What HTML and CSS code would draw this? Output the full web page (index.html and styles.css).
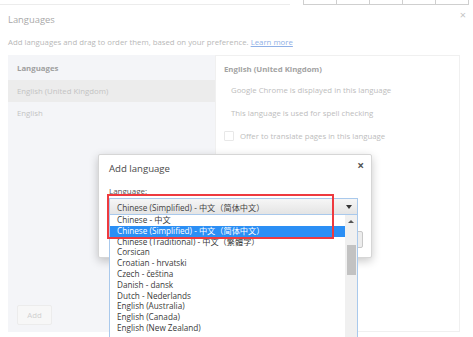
FILE: index.html
```html
<!DOCTYPE html>
<html lang="en">
  <head>
    <meta charset="UTF-8" />
    <meta name="viewport" content="width=device-width, initial-scale=1.0" />
    <title>Languages</title>
    <link rel="stylesheet" href="styles.css">
  </head>
  <body>
    <div class="page">
      <div class="top-strip">
        <div class="top-line"></div>
        <div class="top-grid">
          <span></span><span></span><span></span><span></span><span></span>
        </div>
      </div>

      <div class="settings">
        <div class="settings-head">
          <div class="settings-title">Languages</div>
          <div class="settings-close">&times;</div>
        </div>
        <div class="settings-desc">
          Add languages and drag to order them, based on your preference.
          <a class="link">Learn more</a>
        </div>
        <div class="panels">
          <div class="lang-list">
            <div class="lang-head">Languages</div>
            <div class="lang-row selected">English (United Kingdom)</div>
            <div class="lang-row">English</div>
            <div class="lang-spacer"></div>
            <div class="add-button">Add</div>
          </div>
          <div class="lang-detail">
            <div class="detail-head">English (United Kingdom)</div>
            <div class="detail-line">Google Chrome is displayed in this language</div>
            <div class="detail-line">This language is used for spell checking</div>
            <div class="detail-check">
              <span class="checkbox"></span>
              <span>Offer to translate pages in this language</span>
            </div>
          </div>
        </div>
      </div>

      <div class="dialog">
        <div class="dialog-head">
          <div class="dialog-title">Add language</div>
          <div class="dialog-close">&times;</div>
        </div>
        <div class="field-label">Language:</div>
        <div class="select-wrap">
          <div class="select">
            <span>Chinese (Simplified) - 中文（简体中文）</span>
            <span class="select-arrow"></span>
          </div>
          <div class="dropdown">
            <div class="options">
              <div class="option">Chinese - 中文</div>
              <div class="option active">Chinese (Simplified) - 中文（简体中文）</div>
              <div class="option">Chinese (Traditional) - 中文（繁體字）</div>
              <div class="option">Corsican</div>
              <div class="option">Croatian - hrvatski</div>
              <div class="option">Czech - čeština</div>
              <div class="option">Danish - dansk</div>
              <div class="option">Dutch - Nederlands</div>
              <div class="option">English (Australia)</div>
              <div class="option">English (Canada)</div>
              <div class="option">English (New Zealand)</div>
            </div>
            <div class="scrollbar">
              <span class="scroll-up"></span>
              <span class="scroll-thumb"></span>
            </div>
          </div>
        </div>
        <div class="hidden-button"></div>
      </div>

      <div class="highlight-box"></div>
    </div>
  </body>
</html>
```

FILE: styles.css
```css
body {
  margin: 0;
  font-family: "Open Sans", "Noto Sans CJK SC", sans-serif;
  background-color: #ffffff;
}
.page {
  position: relative;
  width: 473px;
  height: 337px;
  overflow: hidden;
  background-color: #ffffff;
}
.top-strip {
  display: flex;
  justify-content: space-between;
  height: 5px;
}
.top-line {
  width: 290px;
  border-bottom: 1px solid #ececec;
}
.top-grid {
  display: flex;
  margin-right: 4px;
  border-bottom: 1px solid #cfcfcf;
  border-left: 1px solid #cfcfcf;
}
.top-grid span {
  width: 32px;
  border-right: 1px solid #cfcfcf;
}
.settings {
  margin: 0 13px 0 8px;
  display: flex;
  flex-direction: column;
}
.settings-head {
  display: flex;
  justify-content: space-between;
  align-items: flex-start;
  height: 32px;
}
.settings-title {
  margin-top: 8px;
  font-size: 9.4px;
  color: #a9a9a9;
}
.settings-close {
  margin-top: 2px;
  margin-right: -6px;
  font-size: 11px;
  color: #c4c4c4;
}
.settings-desc {
  font-size: 7.8px;
  color: #b8b8b8;
  height: 18px;
}
.link {
  color: #8fb0e6;
  text-decoration: underline;
}
.panels {
  display: grid;
  grid-template-columns: 207px 245px;
  height: 277px;
}
.lang-list {
  display: flex;
  flex-direction: column;
  background-color: #f4f5f8;
  font-size: 7.8px;
  color: #c3c3c3;
}
.lang-head {
  padding: 8px 9px;
  height: 9px;
  font-weight: bold;
  color: #9f9f9f;
}
.lang-row {
  padding: 0 9px;
  height: 22px;
  line-height: 22px;
}
.lang-row.selected {
  background-color: #ececec;
}
.lang-spacer {
  flex: 1;
}
.add-button {
  margin: 0 0 7px 9px;
  width: 33px;
  height: 18px;
  line-height: 18px;
  text-align: center;
  border: 1px solid #ececec;
  border-radius: 2px;
  background-color: #f7f7f7;
  color: #d0d0d0;
}
.lang-detail {
  border: 1px solid #f0f0f0;
  background-color: #ffffff;
  font-size: 7.8px;
  color: #bdbdbd;
  padding: 0 8px;
}
.detail-head {
  padding: 8px 0 0;
  height: 15px;
  font-weight: bold;
  color: #a3a3a3;
}
.detail-line {
  padding-left: 7px;
  height: 23px;
  line-height: 23px;
}
.detail-check {
  display: flex;
  align-items: center;
  gap: 6px;
  height: 22px;
}
.checkbox {
  width: 8px;
  height: 8px;
  border: 1px solid #e8e8e8;
  border-radius: 1px;
}
.dialog {
  position: absolute;
  left: 98px;
  top: 154px;
  width: 252px;
  height: 102px;
  padding: 0 10px;
  background-color: #ffffff;
  border: 1px solid #d6d6d6;
  border-radius: 2px;
  box-shadow: 0 3px 10px rgba(0, 0, 0, 0.22);
}
.dialog-head {
  display: flex;
  justify-content: space-between;
  align-items: flex-start;
  height: 30px;
}
.dialog-title {
  margin-top: 7px;
  font-size: 9.6px;
  color: #4a4a4a;
}
.dialog-close {
  margin-top: 2px;
  margin-right: -3px;
  font-size: 12px;
  font-weight: bold;
  color: #555555;
}
.field-label {
  height: 13px;
  font-size: 8px;
  color: #555555;
}
.select-wrap {
  position: relative;
  z-index: 1;
  width: 249px;
}
.select {
  display: flex;
  justify-content: space-between;
  align-items: center;
  height: 15px;
  padding: 0 5px 0 7px;
  font-size: 8.2px;
  color: #444444;
  border: 1px solid #a9c9ec;
  background: linear-gradient(#f6f6f6, #e4e4e4);
}
.select-arrow {
  width: 0;
  height: 0;
  border-left: 3px solid transparent;
  border-right: 3px solid transparent;
  border-top: 4px solid #333333;
}
.dropdown {
  position: absolute;
  left: 0;
  top: 16px;
  width: 247px;
  height: 130px;
  display: flex;
  background-color: #ffffff;
  border: 1px solid #a9c9ec;
}
.options {
  flex: 1;
  font-size: 8.2px;
  color: #3a3a3a;
}
.option {
  height: 10.8px;
  line-height: 10.8px;
  padding-left: 7px;
  white-space: nowrap;
}
.option.active {
  background-color: #2b8ff5;
  color: #ffffff;
}
.scrollbar {
  display: flex;
  flex-direction: column;
  align-items: center;
  width: 12px;
  background-color: #f0f0f0;
}
.scroll-up {
  margin-top: 5px;
  width: 0;
  height: 0;
  border-left: 3px solid transparent;
  border-right: 3px solid transparent;
  border-bottom: 3px solid #555555;
}
.scroll-thumb {
  margin-top: 22px;
  width: 9px;
  height: 30px;
  background-color: #c2c2c2;
}
.hidden-button {
  position: absolute;
  right: 8px;
  top: 76px;
  width: 6px;
  height: 15px;
  border: 1px solid #c8c8c8;
  border-radius: 2px;
  background-color: #ededed;
}
.highlight-box {
  position: absolute;
  z-index: 2;
  left: 107px;
  top: 194px;
  width: 223px;
  height: 41px;
  border: 2px solid #ee3a3f;
}
```
